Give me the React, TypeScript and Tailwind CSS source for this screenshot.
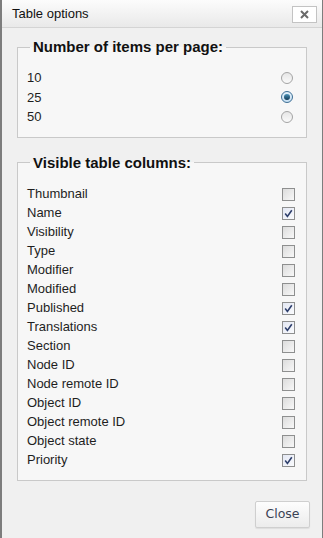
import React from "react";

const pageSizes = [
  { label: "10", checked: false },
  { label: "25", checked: true },
  { label: "50", checked: false },
];

const columns = [
  { label: "Thumbnail", checked: false },
  { label: "Name", checked: true },
  { label: "Visibility", checked: false },
  { label: "Type", checked: false },
  { label: "Modifier", checked: false },
  { label: "Modified", checked: false },
  { label: "Published", checked: true },
  { label: "Translations", checked: true },
  { label: "Section", checked: false },
  { label: "Node ID", checked: false },
  { label: "Node remote ID", checked: false },
  { label: "Object ID", checked: false },
  { label: "Object remote ID", checked: false },
  { label: "Object state", checked: false },
  { label: "Priority", checked: true },
];

function Radio({ checked }: { checked: boolean }) {
  return (
    <span
      className={
        "flex h-[12px] w-[12px] items-center justify-center rounded-full border " +
        (checked
          ? "border-[#3d6f95] bg-gradient-to-b from-[#e4f1fb] to-[#c6dff2]"
          : "border-[#a4a4a4] bg-gradient-to-b from-[#e6e6e6] to-[#fafafa]")
      }
    >
      {checked && (
        <span className="h-[6px] w-[6px] rounded-full bg-gradient-to-b from-[#4c94b8] to-[#123a57]" />
      )}
    </span>
  );
}

function Checkbox({ checked }: { checked: boolean }) {
  return (
    <span
      className={
        "flex h-[13px] w-[13px] items-center justify-center border border-[#8e8f8f] " +
        (checked
          ? "bg-gradient-to-br from-[#e3e7f3] to-[#fafbfd]"
          : "bg-gradient-to-br from-[#dcdcdc] to-[#f8f8f8]")
      }
    >
      {checked && (
        <svg width="9" height="9" viewBox="0 0 9 9">
          <path d="M1.2 4.6 L3.4 7.4 L7.8 1.2" fill="none" stroke="#2e3f6c" strokeWidth="1.6" />
        </svg>
      )}
    </span>
  );
}

export default function App() {
  return (
    <div
      className="flex h-[538px] w-[323px] flex-col border-l-2 border-r border-[#7d7d7d] bg-[#f0f0f0] text-[#1e1e1e]"
      style={{ fontFamily: '"Liberation Sans", Arial, sans-serif' }}
    >
      {/* title bar */}
      <div className="flex h-[28px] items-center justify-between border-b border-[#d4d4d4] bg-gradient-to-b from-[#fcfcfc] to-[#e9e9e9] pl-[10px] pr-[5px]">
        <span className="text-[13px] text-[#111]">Table options</span>
        <button className="mt-[1px] flex h-[17px] w-[25px] items-center justify-center border border-[#c3c3c3] bg-white">
          <svg width="9" height="9" viewBox="0 0 9 9">
            <path d="M1 1 L8 8 M8 1 L1 8" stroke="#6a6a6a" strokeWidth="2" />
          </svg>
        </button>
      </div>

      <div className="flex flex-1 flex-col px-[15px]">
        <fieldset className="mt-[10px] border border-[#c9c9c9] bg-[#f7f7f7] px-[9px] pt-[12px] pb-[10px]">
          <legend className="ml-[3px] px-[3px] text-[15px] font-bold leading-[18px] text-[#111]">
            Number of items per page:
          </legend>
          {pageSizes.map((s) => (
            <div key={s.label} className="flex h-[19.5px] items-center justify-between pr-[4px] text-[13px]">
              <span>{s.label}</span>
              <Radio checked={s.checked} />
            </div>
          ))}
        </fieldset>

        <fieldset className="mt-[16px] border border-[#c9c9c9] bg-[#f7f7f7] px-[9px] pt-[13px] pb-[10px]">
          <legend className="ml-[3px] px-[3px] text-[15px] font-bold leading-[18px] text-[#111]">
            Visible table columns:
          </legend>
          {columns.map((c) => (
            <div key={c.label} className="flex h-[19px] items-center justify-between pr-[2px] text-[13px]">
              <span>{c.label}</span>
              <Checkbox checked={c.checked} />
            </div>
          ))}
        </fieldset>

        <div className="mt-auto mb-[10px] flex justify-end">
          <button
            className="-mr-[3px] h-[27px] w-[55px] rounded-[2px] border border-[#cfcfcf] bg-gradient-to-b from-[#fdfdfd] to-[#ececec] text-[#3a4254] shadow-[0_1px_1px_rgba(0,0,0,0.08)]"
            style={{ fontFamily: '"DejaVu Sans", Verdana, sans-serif', fontSize: "12.5px" }}
          >
            Close
          </button>
        </div>
      </div>
    </div>
  );
}
